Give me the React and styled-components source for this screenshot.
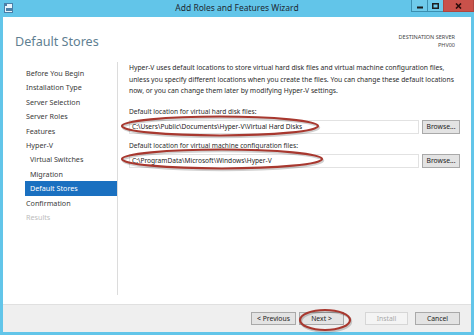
import React from "react";
import styled, { createGlobalStyle } from "styled-components";

const GlobalStyle = createGlobalStyle`
  html, body {
    margin: 0;
    padding: 0;
    background: #ffffff;
  }
  body {
    font-family: "Noto Sans", "Open Sans", "Liberation Sans", sans-serif;
  }
`;

const Window = styled.div`
  position: relative;
  width: 474px;
  height: 335px;
  box-sizing: border-box;
  background: #62c5e9;
  padding: 0 3px 3px 3px;
  display: flex;
  flex-direction: column;
  overflow: hidden;
`;

const TitleBar = styled.div`
  height: 17px;
  display: flex;
  align-items: flex-start;
  position: relative;
`;

const AppIcon = styled.svg`
  margin: 3px 0 0 1px;
`;

const Title = styled.div`
  position: absolute;
  left: 0;
  right: 0;
  top: 2px;
  text-align: center;
  font-size: 8.5px;
  color: #1e2a33;
  pointer-events: none;
`;

const Controls = styled.div`
  margin-left: auto;
  margin-right: -3px;
  display: flex;
  height: 12px;
`;

const CtrlButton = styled.div`
  width: ${p => p.$w}px;
  height: 12px;
  box-sizing: border-box;
  display: flex;
  align-items: center;
  justify-content: center;
  background: ${p => (p.$close ? "#c9514a" : "#6fcbeb")};
  border: 1px solid ${p => (p.$close ? "#b0463f" : "#3c8fb0")};
  border-top: none;
  margin-left: -1px;
`;

const Body = styled.div`
  flex: 1;
  background: #ffffff;
  display: flex;
  flex-direction: column;
`;

const Header = styled.div`
  height: 45px;
  display: flex;
  justify-content: space-between;
  align-items: flex-start;
  padding: 0 16px 0 12px;
`;

const PageTitle = styled.h1`
  margin: 16px 0 0 0;
  font-size: 12.6px;
  font-weight: 400;
  color: #5f7f92;
`;

const ServerInfo = styled.div`
  margin-top: 16px;
  text-align: right;
  font-size: 5.5px;
  line-height: 8px;
  color: #444;
`;

const Main = styled.div`
  flex: 1;
  display: flex;
`;

const Nav = styled.ul`
  list-style: none;
  margin: 0 0 9px 0;
  padding: 4px 0 0 0;
  width: 114px;
  border-right: 1px solid #dcdcdc;
`;

const NavItem = styled.li`
  margin-left: 22px;
  height: 14.4px;
  line-height: 14.4px;
  padding-left: ${p => (p.$sub ? 5 : 1)}px;
  font-size: 7.2px;
  color: ${p => (p.$active ? "#ffffff" : p.$disabled ? "#bdbdbd" : "#3a3a3a")};
  background: ${p => (p.$active ? "#1a70c0" : "transparent")};
  white-space: nowrap;
`;

const Content = styled.div`
  flex: 1;
  padding: 0 11px 0 11px;
  font-size: 6.6px;
  color: #2b2b2b;
`;

const Para = styled.p`
  margin: 0;
  line-height: 11.5px;
  font-size: 6.75px;
  white-space: nowrap;
`;

const FieldLabel = styled.div`
  margin-top: ${p => p.$top}px;
  line-height: 11px;
  height: 11px;
`;

const FieldRow = styled.div`
  display: flex;
  gap: 3px;
  margin-top: 3px;
`;

const PathInput = styled.div`
  flex: 1;
  height: 14px;
  box-sizing: border-box;
  border: 1px solid #e2e2e2;
  background: #fff;
  padding-left: 2px;
  line-height: 12px;
  font-size: 6.6px;
  color: #222;
  white-space: nowrap;
`;

const Button = styled.div`
  width: ${p => p.$w}px;
  height: ${p => p.$h}px;
  box-sizing: border-box;
  display: flex;
  align-items: center;
  justify-content: center;
  background: ${p => (p.$disabled ? "#f4f4f4" : "#e3e3e3")};
  border: 1px solid ${p => (p.$disabled ? "#d6d6d6" : "#a9a9a9")};
  color: ${p => (p.$disabled ? "#a8a8a8" : "#222")};
  font-size: 6.8px;
`;

const Footer = styled.div`
  height: 28px;
  box-sizing: border-box;
  background: #efefef;
  border-top: 1px solid #e0e0e0;
  display: flex;
  align-items: center;
  justify-content: flex-end;
  padding: 0 11px 0 0;
`;

const Spacer = styled.div`
  width: ${p => p.$w}px;
`;

const Annotations = styled.svg`
  position: absolute;
  left: 0;
  top: 0;
  pointer-events: none;
`;

const navItems = [
  { label: "Before You Begin" },
  { label: "Installation Type" },
  { label: "Server Selection" },
  { label: "Server Roles" },
  { label: "Features" },
  { label: "Hyper-V" },
  { label: "Virtual Switches", sub: true },
  { label: "Migration", sub: true },
  { label: "Default Stores", sub: true, active: true },
  { label: "Confirmation" },
  { label: "Results", disabled: true },
];

function RedRing({ cx, cy, rx, ry }) {
  return (
    <g>
      <ellipse cx={cx + 1} cy={cy + 1.5} rx={rx} ry={ry} fill="none" stroke="rgba(0,0,0,0.18)" strokeWidth="2.5" />
      <ellipse cx={cx} cy={cy} rx={rx} ry={ry} fill="none" stroke="#a8382f" strokeWidth="2.2" />
    </g>
  );
}

export default function App() {
  return (
    <>
      <GlobalStyle />
      <Window>
        <TitleBar>
          <AppIcon width="10" height="10" viewBox="0 0 10 10">
            <rect x="0.5" y="0.5" width="8" height="9" fill="#e8f4fb" stroke="#4a7fa8" strokeWidth="1" />
            <rect x="2" y="5" width="6" height="3" fill="#4a7fa8" />
            <rect x="1" y="1" width="2" height="2" fill="#4a7fa8" />
          </AppIcon>
          <Title>Add Roles and Features Wizard</Title>
          <Controls>
            <CtrlButton $w={17}>
              <svg width="6" height="6" viewBox="0 0 6 6"><rect x="0" y="3.5" width="6" height="2" fill="#1d1d1d" /></svg>
            </CtrlButton>
            <CtrlButton $w={17}>
              <svg width="7" height="6" viewBox="0 0 7 6"><rect x="0.75" y="0.75" width="5.5" height="4.5" fill="none" stroke="#1d1d1d" strokeWidth="1.5" /></svg>
            </CtrlButton>
            <CtrlButton $w={31} $close>
              <svg width="7" height="6" viewBox="0 0 7 6"><path d="M1 0.5 L6 5.5 M6 0.5 L1 5.5" stroke="#2a0c0a" strokeWidth="1.6" /></svg>
            </CtrlButton>
          </Controls>
        </TitleBar>
        <Body>
          <Header>
            <PageTitle>Default Stores</PageTitle>
            <ServerInfo>
              DESTINATION SERVER
              <br />
              PHV00
            </ServerInfo>
          </Header>
          <Main>
            <Nav>
              {navItems.map(item => (
                <NavItem key={item.label} $sub={item.sub} $active={item.active} $disabled={item.disabled}>
                  {item.label}
                </NavItem>
              ))}
            </Nav>
            <Content>
              <Para>
                Hyper-V uses default locations to store virtual hard disk files and virtual machine configuration files,
                <br />
                unless you specify different locations when you create the files. You can change these default locations
                <br />
                now, or you can change them later by modifying Hyper-V settings.
              </Para>
              <FieldLabel $top={9}>Default location for virtual hard disk files:</FieldLabel>
              <FieldRow>
                <PathInput>C:\Users\Public\Documents\Hyper-V\Virtual Hard Disks</PathInput>
                <Button $w={38} $h={14}>Browse...</Button>
              </FieldRow>
              <FieldLabel $top={6}>Default location for virtual machine configuration files:</FieldLabel>
              <FieldRow>
                <PathInput>C:\ProgramData\Microsoft\Windows\Hyper-V</PathInput>
                <Button $w={38} $h={14}>Browse...</Button>
              </FieldRow>
            </Content>
          </Main>
          <Footer>
            <Button $w={45} $h={13}>&lt; Previous</Button>
            <Spacer $w={3} />
            <Button $w={45} $h={13}>Next &gt;</Button>
            <Spacer $w={21} />
            <Button $w={43} $h={13} $disabled>Install</Button>
            <Spacer $w={7} />
            <Button $w={45} $h={13}>Cancel</Button>
          </Footer>
        </Body>
        <Annotations width="474" height="335" viewBox="0 0 474 335">
          <RedRing cx={220} cy={126} rx={98} ry={9.5} />
          <RedRing cx={222} cy={159} rx={100} ry={9.5} />
          <RedRing cx={325} cy={320} rx={25} ry={10} />
        </Annotations>
      </Window>
    </>
  );
}
